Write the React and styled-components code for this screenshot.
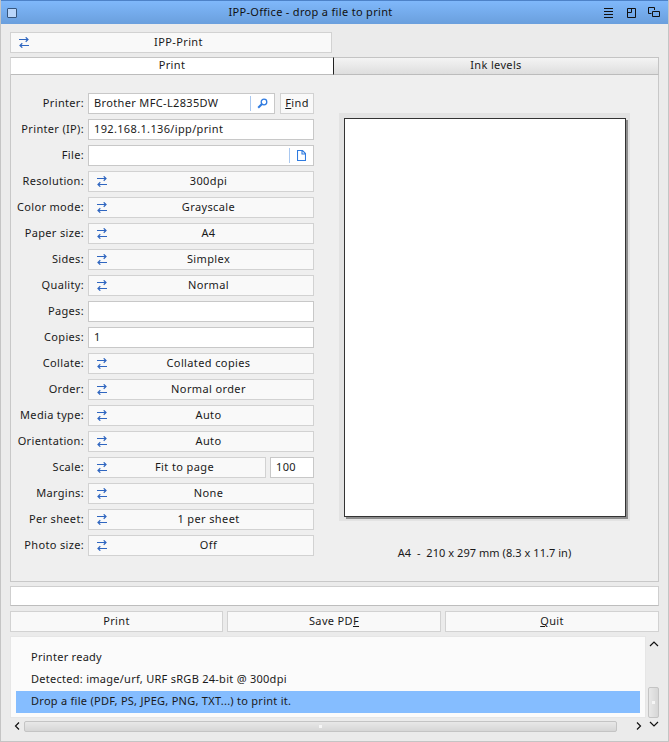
import React from 'react';
import styled, { createGlobalStyle } from 'styled-components';

const Global = createGlobalStyle`
  html, body { margin: 0; padding: 0; background: #ebebeb; }
  * { box-sizing: border-box; }
  body { font-family: "Noto Sans", "Open Sans", sans-serif; font-size: 11px; color: #1a1a1a; }
`;

const Win = styled.div`
  width: 669px; height: 742px; display: flex; flex-direction: column;
  background: #ebebeb; border: 1px solid #c4c4c4; border-top: 0; overflow: hidden;
`;
const TitleBar = styled.div`
  height: 24px; flex: none; margin: 0 -1px; padding: 0 9px 0 7px; display: flex; align-items: center;
  background: linear-gradient(#7fb8fb, #6a9fdd); border-top: 1px solid #4d82c8;
`;
const WinMenu = styled.div`
  width: 10px; height: 10px; border: 1px solid #36567e; border-radius: 1px; background: #b9d6fb;
`;
const Title = styled.div`flex: 1; text-align: center; color: #111; letter-spacing: .32px; padding-bottom: 2px;`;
const TitleIcons = styled.div`display: flex; gap: 10px; align-items: center;`;
const Hamburger = styled.svg`margin-right: 4px;`;
const Body = styled.div`flex: 1; display: flex; flex-direction: column; padding: 8px 9px 0;`;

const Combo = styled.div`
  height: 21px; flex: ${p => p.$grow ? 1 : 'none'}; display: flex; align-items: center; position: relative;
  width: ${p => p.$w ? p.$w + 'px' : 'auto'}; padding-bottom: 2px;
  background: #f9f9f9; border: 1px solid #d2d2d2;
`;
const ComboIcon = styled.svg`position: absolute; left: 8px; top: 4px;`;
const ComboText = styled.span`flex: 1; text-align: center; letter-spacing: .38px; padding-left: 15px;`;

const TabBar = styled.div`display: flex; margin-top: 4px; height: 18px;`;
const Tab = styled.div`
  flex: ${p => p.$w ? 'none' : 1}; width: ${p => p.$w}px; text-align: center; line-height: 14px; letter-spacing: .35px;
  border: 1px solid #c4c4c4; border-bottom: 1px solid #bcbcbc;
  ${p => p.$active
    ? 'background: #fff; border-right: 1px solid #222; border-left: 1px solid #d8d8d8;'
    : 'background: linear-gradient(#f4f4f4, #dedede); border-left: 0;'}
`;
const Panel = styled.div`
  height: 507px; flex: none; display: flex; background: #efefef;
  border: 1px solid #c8c8c8; border-top: 0; padding: 18px 0 0 0;
`;
const Form = styled.div`width: 303px; flex: none; display: flex; flex-direction: column; gap: 5px;`;
const Row = styled.div`display: flex; align-items: center; height: 21px;`;
const Label = styled.label`
  width: 73px; margin-right: 4px; text-align: right; white-space: nowrap; flex: none; letter-spacing: .33px; padding-bottom: 2px;
`;
const Field = styled.div`
  height: 21px; display: flex; align-items: center; position: relative; flex: ${p => p.$w ? 'none' : 1};
  width: ${p => p.$w ? p.$w + 'px' : 'auto'}; padding: 0 0 2px 5px;
  background: #fff; border: 1px solid #c8c8c8; letter-spacing: .35px;
`;
const FieldText = styled.span`flex: 1;`;
const Sep = styled.span`width: 1px; height: 15px; background: #a9c8f0; margin-top: 2px;`;
const FieldIcon = styled.svg`margin: 2px ${p => p.$mr || 7}px 0 ${p => p.$ml || 6}px;`;
const FindBtn = styled.div`
  width: 34px; height: 21px; margin-left: 5px; flex: none; text-align: center; line-height: 17px;
  background: #f9f9f9; border: 1px solid #d2d2d2; letter-spacing: .35px;
`;
const Under = styled.span`text-decoration: underline;`;
const Row2 = styled.div`display: flex; flex: 1; gap: 4px;`;

const PreviewCol = styled.div`flex: 1; display: flex; flex-direction: column; padding: 20px 0 0 25px;`;
const PreviewBox = styled.div`
  width: 291px; height: 408px; background: #e3e3e3; padding: 5px 0 0 5px;
`;
const Page = styled.div`
  width: 282px; height: 399px; background: #fff; border: 1px solid #333;
  box-shadow: 2px 2px 0 #8d8d8d;
`;
const Caption = styled.div`width: 291px; text-align: center; margin-top: 24px; letter-spacing: .05px;`;

const Line = styled.div`
  height: 20px; margin-top: 4px; background: #fff; border: 1px solid #cfcfcf; flex: none; border-bottom-color: #bdbdbd;
`;
const Buttons = styled.div`display: grid; grid-template-columns: 213px 214px 214px; gap: 4px; margin-top: 5px; flex: none;`;
const Btn = styled.div`
  height: 21px; line-height: 17px; text-align: center; letter-spacing: .35px;
  background: #f9f9f9; border: 1px solid #d2d2d2;
`;
const LogArea = styled.div`
  margin-top: 4px; display: grid; grid-template-columns: 1fr 14px; grid-template-rows: 82px 14px;
`;
const List = styled.div`
  background: #fbfbfb; border: 1px solid #e6e6e6; padding: 10px 5px 5px 5px;
`;
const Item = styled.div`
  height: 22px; line-height: 20px; padding-left: 15px; letter-spacing: .27px; white-space: nowrap;
  background: ${p => p.$sel ? '#85bdff' : 'transparent'};
`;
const VBar = styled.div`
  display: flex; flex-direction: column; align-items: center; padding: 4px 1px 0 2px; justify-content: space-between;
`;
const HBar = styled.div`display: flex; align-items: center; padding-top: 2px; height: 14px;`;
const HThumb = styled.div`
  width: 593px; margin: 0 19px 0 4px; height: 11px; flex: none; border: 1px solid #c4c4c4; border-radius: 2px;
  background: linear-gradient(#e8e8e8, #d6d6d6);
  display: flex; align-items: center; justify-content: center;
`;
const VThumb = styled.div`
  width: 11px; height: 31px; border: 1px solid #c4c4c4; border-radius: 2px; background: linear-gradient(90deg, #e8e8e8, #d6d6d6);
  display: flex; align-items: center; justify-content: center;
`;
const Grip = styled.span`width: 3px; height: 3px; background: #f6f6f6;`;
const Corner = styled.div`display: flex; justify-content: center; padding: 2px 1px 0 2px;`;

const Swap = () => (
  <ComboIcon width="11" height="11" viewBox="0 0 11 11" fill="none" stroke="#2f66c0" strokeWidth="1">
    <path d="M0 2.500H9M6.700 .3L9 2.500L6.700 4.700" strokeWidth="1.200" />
    <path d="M10 8.500H1M3.300 6.300L1 8.500L3.300 10.700" strokeWidth="1.200" />
  </ComboIcon>
);
const Chev = ({ d }) => (
  <svg width="10" height="8" viewBox="0 0 10 8" fill="none" stroke="#111" strokeWidth="1.200"><path d={d} /></svg>
);

const rows1 = [
  ['Resolution:', '300dpi'], ['Color mode:', 'Grayscale'], ['Paper size:', 'A4'], ['Sides:', 'Simplex'], ['Quality:', 'Normal'],
];
const rows2 = [
  ['Collate:', 'Collated copies'], ['Order:', 'Normal order'], ['Media type:', 'Auto'], ['Orientation:', 'Auto'],
];
const rows3 = [['Margins:', 'None'], ['Per sheet:', '1 per sheet'], ['Photo size:', 'Off']];

const ComboRow = ({ label, value }) => (
  <Row><Label>{label}</Label><Combo $grow><Swap /><ComboText>{value}</ComboText></Combo></Row>
);

export default function App() {
  return (
    <>
      <Global />
      <Win>
        <TitleBar>
          <WinMenu />
          <Title>IPP-Office - drop a file to print</Title>
          <TitleIcons>
            <Hamburger width="9" height="10" viewBox="0 0 9 10" fill="none" stroke="#111"><path d="M0 .5h9M0 3.500h9M0 6.500h9M0 9.500h9" /></Hamburger>
            <svg width="10" height="10" viewBox="0 0 10 10" fill="none" stroke="#111"><path d="M.5 .5h8v9h-8zM4.500 .5v4h-4" /></svg>
            <svg width="13" height="11" viewBox="0 0 13 11" fill="none" stroke="#111"><path d="M1.500 .5h6v2.500M1.500 .5v6h3M5.500 4.500h7v5h-7z" /></svg>
          </TitleIcons>
        </TitleBar>
        <Body>
          <Combo $w={322}><Swap /><ComboText>IPP-Print</ComboText></Combo>
          <TabBar>
            <Tab $active $w={324}>Print</Tab>
            <Tab>Ink levels</Tab>
          </TabBar>
          <Panel>
            <Form>
              <Row>
                <Label>Printer:</Label>
                <Field>
                  <FieldText>Brother MFC-L2835DW</FieldText>
                  <Sep />
                  <FieldIcon width="11" height="11" viewBox="0 0 11 11" fill="none" stroke="#2f7be0" strokeWidth="1.300" $mr={6}>
                    <circle cx="7" cy="4" r="2.800" /><path d="M5 6L1.200 9.800" strokeWidth="2" />
                  </FieldIcon>
                </Field>
                <FindBtn><Under>F</Under>ind</FindBtn>
              </Row>
              <Row><Label>Printer (IP):</Label><Field>192.168.1.136/ipp/print</Field></Row>
              <Row>
                <Label>File:</Label>
                <Field>
                  <FieldText />
                  <Sep />
                  <FieldIcon width="9" height="11" viewBox="0 0 9 11" fill="none" stroke="#2f7be0" strokeWidth="1.100" $ml={7}>
                    <path d="M.5 .5h5l3 3v7h-8zM5 .5v3.500h3.500" />
                  </FieldIcon>
                </Field>
              </Row>
              {rows1.map(([l, v]) => <ComboRow key={l} label={l} value={v} />)}
              <Row><Label>Pages:</Label><Field /></Row>
              <Row><Label>Copies:</Label><Field>1</Field></Row>
              {rows2.map(([l, v]) => <ComboRow key={l} label={l} value={v} />)}
              <Row>
                <Label>Scale:</Label>
                <Row2>
                  <Combo $grow><Swap /><ComboText>Fit to page</ComboText></Combo>
                  <Field $w={44}>100</Field>
                </Row2>
              </Row>
              {rows3.map(([l, v]) => <ComboRow key={l} label={l} value={v} />)}
            </Form>
            <PreviewCol>
              <PreviewBox><Page /></PreviewBox>
              <Caption>A4&nbsp; -&nbsp; 210 x 297 mm (8.3 x 11.7 in)</Caption>
            </PreviewCol>
          </Panel>
          <Line />
          <Buttons>
            <Btn>Print</Btn>
            <Btn>Save PD<Under>F</Under></Btn>
            <Btn><Under>Q</Under>uit</Btn>
          </Buttons>
          <LogArea>
            <List>
              <Item>Printer ready</Item>
              <Item>Detected: image/urf, URF sRGB 24-bit @ 300dpi</Item>
              <Item $sel>Drop a file (PDF, PS, JPEG, PNG, TXT...) to print it.</Item>
            </List>
            <VBar>
              <Chev d="M1 6L5 2L9 6" />
              <VThumb><Grip /></VThumb>
            </VBar>
            <HBar>
              <Chev d="M9 .5L5.500 4L9 7.500" />
              <HThumb><Grip /></HThumb>
              <Chev d="M1 .5L4.500 4L1 7.500" />
            </HBar>
            <Corner><Chev d="M1 2L5 6L9 2" /></Corner>
          </LogArea>
        </Body>
      </Win>
    </>
  );
}
